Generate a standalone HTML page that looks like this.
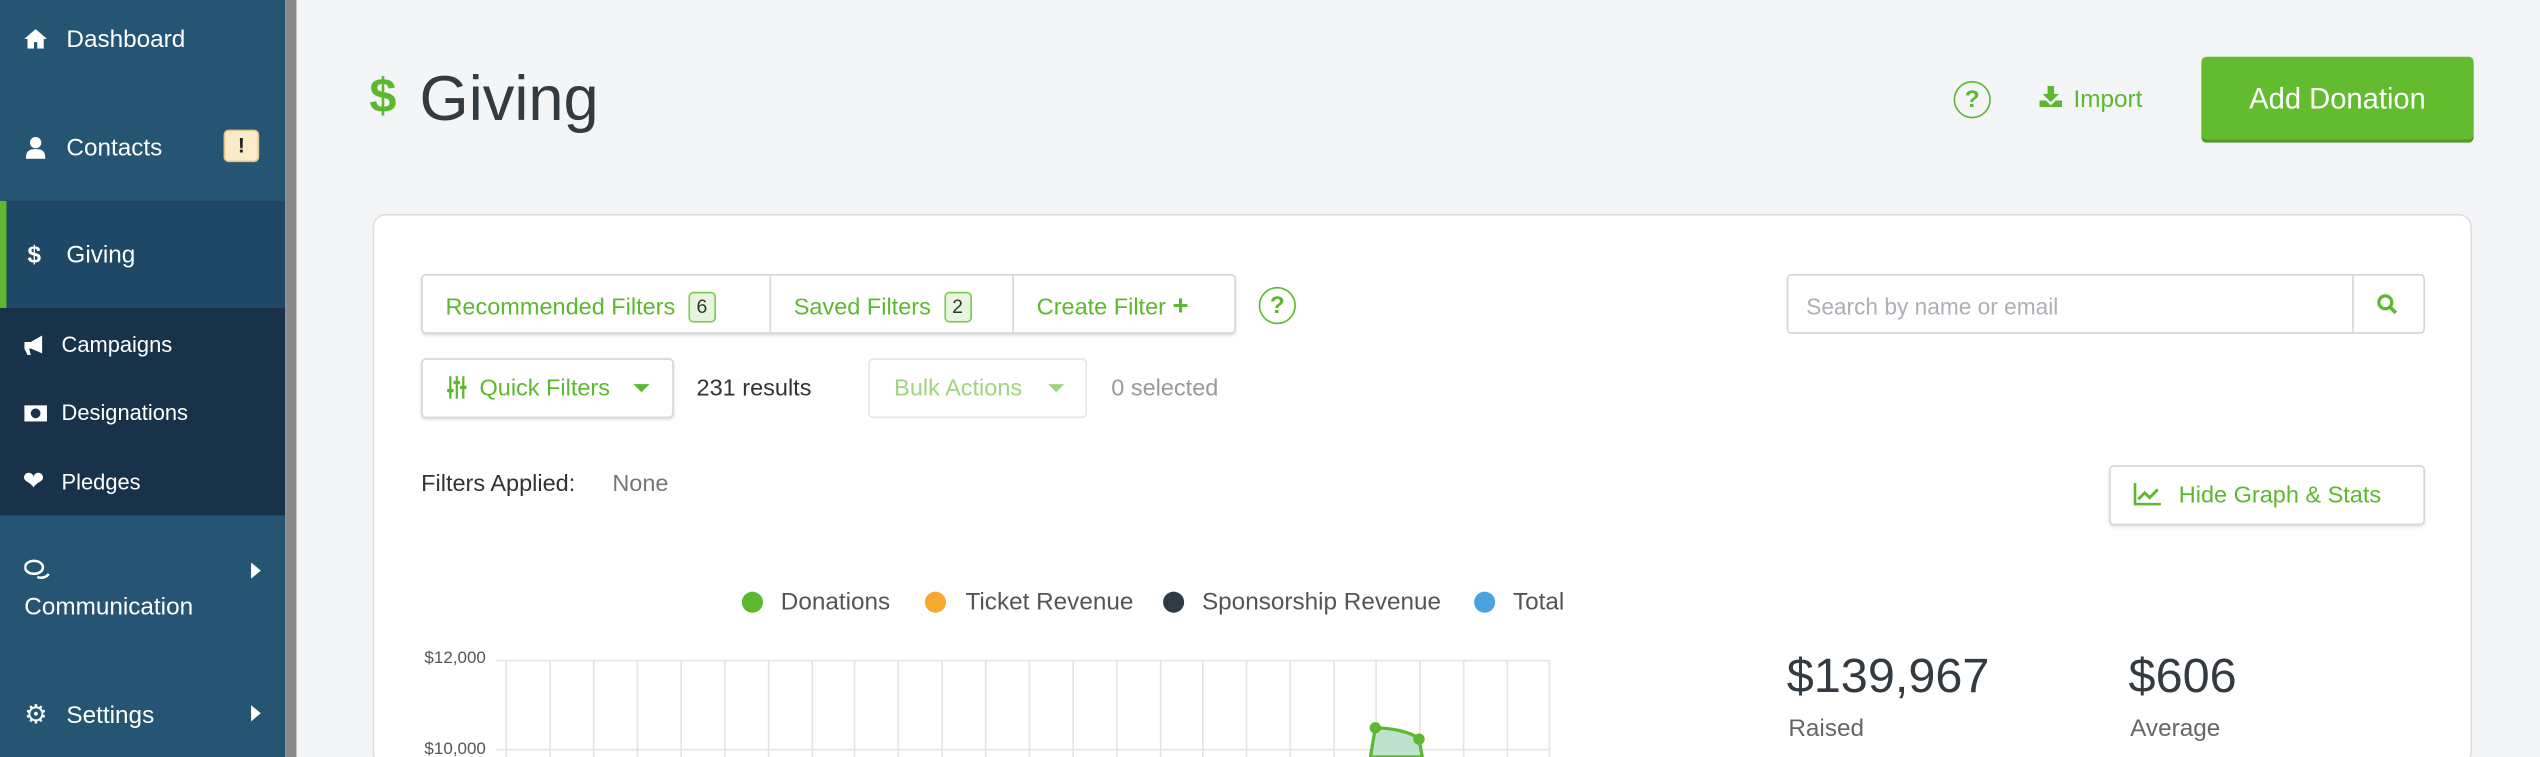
<!DOCTYPE html>
<html><head><meta charset="utf-8"><style>
html,body{margin:0;padding:0;width:2540px;height:757px;overflow:hidden;background:#f4f5f7}
#s{position:absolute;left:0;top:0;width:1568px;height:467px;transform:scale(1.61990,1.62099);transform-origin:0 0;font-family:"Liberation Sans",sans-serif;overflow:hidden;background:#f4f5f7}
.a{position:absolute;white-space:nowrap}
.sb{position:absolute;left:0;width:176px}
.nav{color:#fff;font-size:15px}
.g{color:#5cb82e}
.btn{position:absolute;border:1px solid #d4d6d8;border-radius:3px;background:#fff;box-shadow:0 1px 2px rgba(0,0,0,.12);box-sizing:border-box}
.badge{display:inline-block;border:1px solid #7ccb55;background:#e7f5de;color:#333;border-radius:3px;font-size:12px;width:15px;height:17px;line-height:17px;text-align:center;margin-left:8px;vertical-align:1px}
.q{position:absolute;border:1.3px solid #5cb82e;border-radius:50%;color:#5cb82e;font-weight:bold;text-align:center;box-sizing:border-box}
.dot{position:absolute;width:13px;height:13px;border-radius:50%}
.leg{position:absolute;font-size:15px;color:#555;top:363px}
</style></head><body><div id="s">
<div class="sb" style="top:0;height:124px;background:#255573"></div>
<div class="sb" style="top:124px;height:66px;background:#1e4865"></div>
<div class="sb" style="top:124px;height:66px;width:4px;background:#5cb82e"></div>
<div class="sb" style="top:190px;height:128px;background:#183349"></div>
<div class="sb" style="top:318px;height:149px;background:#255573"></div>
<div class="a" style="left:176px;top:0;width:7px;height:467px;background:#8a8a8a"></div>

<svg class="a" style="left:15px;top:18px" width="14" height="12" viewBox="0 0 14 12"><path d="M7 0L0 6h2v6h4V8h2v4h4V6h2z" fill="#fff"/></svg>
<div class="a nav" style="left:41px;top:16px">Dashboard</div>
<svg class="a" style="left:16px;top:84px" width="12" height="14" viewBox="0 0 12 14"><circle cx="6" cy="4" r="3.5" fill="#fff"/><path d="M0 14c0-5 2-6 6-6s6 1 6 6z" fill="#fff"/></svg>
<div class="a nav" style="left:41px;top:83px">Contacts</div>
<div class="a" style="left:138px;top:80px;width:22px;height:20px;background:#fcebc8;border:1px solid #e2c58c;border-radius:3px;box-sizing:border-box;text-align:center;font-weight:bold;font-size:13px;line-height:18px;color:#222">!</div>
<div class="a nav" style="left:17px;top:149px;font-weight:bold">$</div>
<div class="a nav" style="left:41px;top:149px">Giving</div>
<svg class="a" style="left:15px;top:207px" width="14" height="12" viewBox="0 0 14 12"><path d="M0 4h4l7-4v11L4 8H3l1 4H2L0 8z" fill="#fff"/></svg>
<div class="a nav" style="left:38px;top:205px;font-size:13.5px">Campaigns</div>
<svg class="a" style="left:15px;top:250px" width="14" height="10" viewBox="0 0 14 10"><rect x="0" y="0" width="14" height="10" fill="#fff"/><circle cx="7" cy="5" r="3" fill="#183349"/></svg>
<div class="a nav" style="left:38px;top:247px;font-size:13.5px">Designations</div>
<div class="a nav" style="left:14px;top:287px;font-size:16px">❤</div>
<div class="a nav" style="left:38px;top:290px;font-size:13.5px">Pledges</div>
<svg class="a" style="left:15px;top:345px" width="16" height="13" viewBox="0 0 16 13"><ellipse cx="6" cy="5" rx="5.5" ry="4" fill="none" stroke="#fff" stroke-width="1.6"/><path d="M8 11c3 1 6 0 7-2" fill="none" stroke="#fff" stroke-width="1.6"/></svg>
<div class="a" style="left:155px;top:347px;border-left:6px solid #fff;border-top:5px solid transparent;border-bottom:5px solid transparent"></div>
<div class="a nav" style="left:15px;top:366px">Communication</div>
<div class="a nav" style="left:15px;top:431px;font-size:16px">⚙</div>
<div class="a nav" style="left:41px;top:433px">Settings</div>
<div class="a" style="left:155px;top:435px;border-left:6px solid #fff;border-top:5px solid transparent;border-bottom:5px solid transparent"></div>

<div class="a g" style="left:228px;top:43px;font-size:30px;font-weight:bold">$</div>
<div class="a" style="left:259px;top:40px;font-size:39px;color:#333a40">Giving</div>
<div class="q" style="left:1206px;top:50px;width:23px;height:23px;line-height:21px;font-size:15px">?</div>
<svg class="a" style="left:1259px;top:53px" width="14" height="13" viewBox="0 0 14 13"><path d="M5 0h4v5h3L7 10 2 5h3z M0 9h4l3 3 3-3h4v4H0z" fill="#5cb82e"/></svg>
<div class="a g" style="left:1280px;top:53px;font-size:15px">Import</div>
<div class="a" style="left:1359px;top:35px;width:168px;height:51px;background:#63bc2f;border-radius:3px;color:#fff;font-size:18px;text-align:center;line-height:52px;box-shadow:0 2px 0 #4f9d26">Add Donation</div>

<div class="a" style="left:230px;top:132px;width:1296px;height:340px;background:#fff;border:1px solid #dcdfe2;border-radius:8px;box-sizing:border-box"></div>

<div class="btn" style="left:260px;top:169px;width:503px;height:37px"></div>
<div class="a" style="left:475px;top:170px;width:1px;height:35px;background:#d4d6d8"></div>
<div class="a" style="left:625px;top:170px;width:1px;height:35px;background:#d4d6d8"></div>
<div class="a g" style="left:275px;top:180px;font-size:14.5px">Recommended Filters<span class="badge">6</span></div>
<div class="a g" style="left:490px;top:180px;font-size:14.5px">Saved Filters<span class="badge">2</span></div>
<div class="a g" style="left:640px;top:179px;font-size:14.5px">Create Filter <b style="font-size:17px">+</b></div>
<div class="q" style="left:777px;top:177px;width:23px;height:23px;line-height:21px;font-size:15px">?</div>
<div class="btn" style="left:1103px;top:169px;width:394px;height:37px;box-shadow:none"></div>
<div class="a" style="left:1452px;top:170px;width:1px;height:35px;background:#d4d6d8"></div>
<div class="a" style="left:1115px;top:181px;font-size:14px;color:#aab0b5">Search by name or email</div>
<svg class="a" style="left:1467px;top:181px" width="13" height="13" viewBox="0 0 13 13"><circle cx="5.5" cy="5.5" r="4" fill="none" stroke="#5cb82e" stroke-width="2"/><path d="M8.5 8.5L12 12" stroke="#5cb82e" stroke-width="2.2"/></svg>

<div class="btn" style="left:260px;top:221px;width:156px;height:37px"></div>
<svg class="a" style="left:276px;top:232px" width="12" height="14" viewBox="0 0 12 14"><path d="M2 0v14M6 0v14M10 0v14" stroke="#5cb82e" stroke-width="1.4"/><rect x="0" y="8" width="4" height="2" fill="#5cb82e"/><rect x="4" y="3" width="4" height="2" fill="#5cb82e"/><rect x="8" y="6" width="4" height="2" fill="#5cb82e"/></svg>
<div class="a g" style="left:296px;top:232px;font-size:14.5px">Quick Filters</div>
<div class="a" style="left:391px;top:237px;border-top:5px solid #5cb82e;border-left:5px solid transparent;border-right:5px solid transparent"></div>
<div class="a" style="left:430px;top:232px;font-size:14.5px;color:#333">231 results</div>
<div class="btn" style="left:536px;top:221px;width:135px;height:37px;box-shadow:none;border-color:#e3e5e7"></div>
<div class="a" style="left:552px;top:232px;font-size:14.5px;color:#9fd480">Bulk Actions</div>
<div class="a" style="left:647px;top:237px;border-top:5px solid #9fd480;border-left:5px solid transparent;border-right:5px solid transparent"></div>
<div class="a" style="left:686px;top:232px;font-size:14.5px;color:#999">0 selected</div>

<div class="a" style="left:260px;top:291px;font-size:14.5px;color:#333">Filters Applied:</div>
<div class="a" style="left:378px;top:291px;font-size:14.5px;color:#777">None</div>
<div class="btn" style="left:1302px;top:287px;width:195px;height:37px"></div>
<svg class="a" style="left:1317px;top:298px" width="17" height="14" viewBox="0 0 17 14"><path d="M1 0v13h16" fill="none" stroke="#5cb82e" stroke-width="1.6"/><path d="M3 10l4-4 3 3 5-5" fill="none" stroke="#5cb82e" stroke-width="1.8"/></svg>
<div class="a g" style="left:1345px;top:298px;font-size:14.5px">Hide Graph &amp; Stats</div>

<div class="dot" style="left:458px;top:365px;background:#5cb82e"></div><div class="leg" style="left:482px">Donations</div>
<div class="dot" style="left:571px;top:365px;background:#f6a930"></div><div class="leg" style="left:596px">Ticket Revenue</div>
<div class="dot" style="left:718px;top:365px;background:#2f3a42"></div><div class="leg" style="left:742px">Sponsorship Revenue</div>
<div class="dot" style="left:910px;top:365px;background:#4aa3e0"></div><div class="leg" style="left:934px">Total</div>

<div class="a" style="left:262px;top:400px;font-size:10.5px;color:#555">$12,000</div>
<div class="a" style="left:262px;top:456px;font-size:10.5px;color:#555">$10,000</div>
<svg class="a" style="left:306px;top:400px" width="660" height="67" viewBox="306 400 660 67">
<g stroke="#e4e4e4" stroke-width="1">
<path d="M306 407.5H957M306 462.5H957"/>
<path d="M312.5 407v60M339.5 407v60M366.5 407v60M393.5 407v60M420.5 407v60M447.5 407v60M474.5 407v60M501.5 407v60M527.5 407v60M554.5 407v60M581.5 407v60M608.5 407v60M635.5 407v60M662.5 407v60M689.5 407v60M716.5 407v60M742.5 407v60M769.5 407v60M796.5 407v60M823.5 407v60M849.5 407v60M876.5 407v60M903.5 407v60M930.5 407v60M956.5 407v60"/>
</g>
<path d="M846 467L849 449C860 449 872 452 876 456L878 467Z" fill="#bfe2cf" stroke="#5cb82e" stroke-width="2"/>
<circle cx="849" cy="449" r="3.5" fill="#5cb82e"/><circle cx="876" cy="456" r="3.5" fill="#5cb82e"/>
</svg>

<div class="a" style="left:1103px;top:401px;font-size:30px;color:#333a40">$139,967</div>
<div class="a" style="left:1104px;top:441px;font-size:15px;color:#666">Raised</div>
<div class="a" style="left:1314px;top:401px;font-size:30px;color:#333a40">$606</div>
<div class="a" style="left:1315px;top:441px;font-size:15px;color:#666">Average</div>
</div></body></html>
